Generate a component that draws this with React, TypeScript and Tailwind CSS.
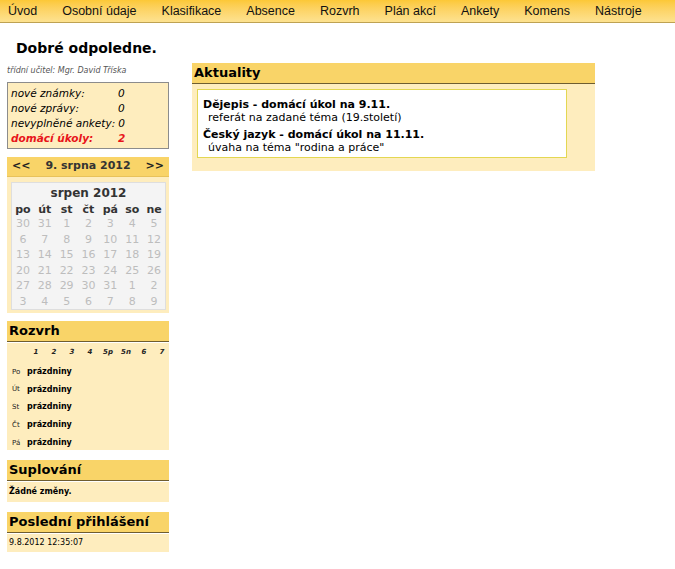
const menu = [
  "Úvod",
  "Osobní údaje",
  "Klasifikace",
  "Absence",
  "Rozvrh",
  "Plán akcí",
  "Ankety",
  "Komens",
  "Nástroje",
];

const summary = [
  { label: "nové známky:", value: "0" },
  { label: "nové zprávy:", value: "0" },
  { label: "nevyplněné ankety:", value: "0" },
  { label: "domácí úkoly:", value: "2", hot: true },
];

const weekDays = ["po", "út", "st", "čt", "pá", "so", "ne"];
const calendar = [
  [30, 31, 1, 2, 3, 4, 5],
  [6, 7, 8, 9, 10, 11, 12],
  [13, 14, 15, 16, 17, 18, 19],
  [20, 21, 22, 23, 24, 25, 26],
  [27, 28, 29, 30, 31, 1, 2],
  [3, 4, 5, 6, 7, 8, 9],
];

const periods = ["1", "2", "3", "4", "5p", "5n", "6", "7"];
const days = ["Po", "Út", "St", "Čt", "Pá"];

const news = [
  {
    title: "Dějepis - domácí úkol na 9.11.",
    text: "referát na zadané téma (19.století)",
  },
  {
    title: "Český jazyk - domácí úkol na 11.11.",
    text: 'úvaha na téma "rodina a práce"',
  },
];

const SectionHeader = ({ title }: { title: string }) => (
  <div className="h-[21px] bg-[#f9d468] border-b border-[#6e5d30] pl-[2px] text-[13px] font-bold leading-[20px] text-black">
    {title}
  </div>
);

const App = () => {
  return (
    <div className="min-h-[569px] bg-white font-['DejaVu_Sans',Verdana,sans-serif] text-black">
      <nav className="h-[23px] flex items-center pl-2 gap-[25px] bg-gradient-to-b from-[#fcc836] to-[#fde290] border-b border-[#bea252] font-['Liberation_Sans',Tahoma,sans-serif] text-[12.5px] text-[#111]">
        {menu.map((item) => (
          <span key={item} className="leading-[22px]">
            {item}
          </span>
        ))}
      </nav>

      <div className="pl-[7px]">
        <h1 className="pt-[16px] pl-[9px] text-[14px] font-bold leading-[18px]">
          Dobré odpoledne.
        </h1>

        <div className="flex gap-[23px] mt-[6px]">
          {/* left column */}
          <div className="w-[162px] flex flex-col">
            <div className="h-[16px] text-[8px] italic leading-[16px] text-[#555] whitespace-nowrap">
              třídní učitel: Mgr. David Tříska
            </div>
            <div className="mt-[3px] h-[67px] bg-[#feedbe] border border-[#8c8c8c] pl-[3px] pt-[3px] italic text-[10.5px]">
              {summary.map((row) => (
                <div
                  key={row.label}
                  className={
                    row.hot
                      ? "flex leading-[15px] whitespace-nowrap font-bold text-[#e8141a]"
                      : "flex leading-[15px] whitespace-nowrap"
                  }
                >
                  <span className="min-w-[104px]">{row.label}</span>
                  <span className="ml-[3px]">{row.value}</span>
                </div>
              ))}
            </div>

            <div className="mt-[8px] h-[20px] bg-[#f9d468] border-b border-[#e8c25a] flex items-center justify-between px-[5px] text-[11px] font-bold text-[#222]">
              <span>&lt;&lt;</span>
              <span className="text-[#333]">9. srpna 2012</span>
              <span>&gt;&gt;</span>
            </div>
            <div className="bg-[#feedbe] pl-[4px] pr-[3px] pt-[5px] pb-[3px]">
              <div className="h-[128px] overflow-hidden bg-[#f4f4f4] border border-[#dedede]">
                <div className="text-center text-[12px] font-bold leading-[21px] text-[#333]">
                  srpen 2012
                </div>
                <div className="grid grid-cols-7 text-center text-[11px] font-bold leading-[12px] text-[#333]">
                  {weekDays.map((d) => (
                    <span key={d}>{d}</span>
                  ))}
                </div>
                {calendar.map((week, i) => (
                  <div
                    key={i}
                    className="grid grid-cols-7 text-center text-[11px] leading-[15.5px] text-[#bdbdbd]"
                  >
                    {week.map((n, j) => (
                      <span key={j}>{n}</span>
                    ))}
                  </div>
                ))}
              </div>
            </div>

            <div className="mt-[8px]">
              <SectionHeader title="Rozvrh" />
              <div className="mt-px bg-[#feedbe] h-[107px] pt-[3px] text-[8px]">
                <div className="grid grid-cols-[20px_repeat(8,18px)] italic font-bold leading-[12px] text-[#222]">
                  <span />
                  {periods.map((p) => (
                    <span key={p} className="text-center text-[7px]">
                      {p}
                    </span>
                  ))}
                </div>
                <div className="mt-[5px] flex flex-col">
                  {days.map((d) => (
                    <div key={d} className="flex h-[17.75px] items-center">
                      <span className="w-[20px] pl-[5px] text-[7px] text-[#222]">
                        {d}
                      </span>
                      <span className="font-bold">prázdniny</span>
                    </div>
                  ))}
                </div>
              </div>
            </div>

            <div className="mt-[10px]">
              <SectionHeader title="Suplování" />
              <div className="mt-px h-[20px] bg-[#feedbe] pl-[2px] text-[8px] font-bold leading-[20px]">
                Žádné změny.
              </div>
            </div>

            <div className="mt-[10px]">
              <SectionHeader title="Poslední přihlášení" />
              <div className="mt-px h-[18px] bg-[#feedbe] pl-[2px] text-[8px] leading-[18px]">
                9.8.2012 12:35:07
              </div>
            </div>
          </div>

          {/* right column */}
          <div className="w-[403px] self-start">
            <SectionHeader title="Aktuality" />
            <div className="bg-[#feedbe] pl-[5px] pt-[5px] pb-[13px]">
              <div className="w-[370px] flex flex-col gap-[4px] bg-white border border-[#e3d752] pl-[5px] pt-[8px] pb-[3px] text-[11px] leading-[13px]">
                {news.map((n) => (
                  <div key={n.title}>
                    <div className="font-bold">{n.title}</div>
                    <div className="pl-[5px]">{n.text}</div>
                  </div>
                ))}
              </div>
            </div>
          </div>
        </div>
      </div>
    </div>
  );
};

export default App;
